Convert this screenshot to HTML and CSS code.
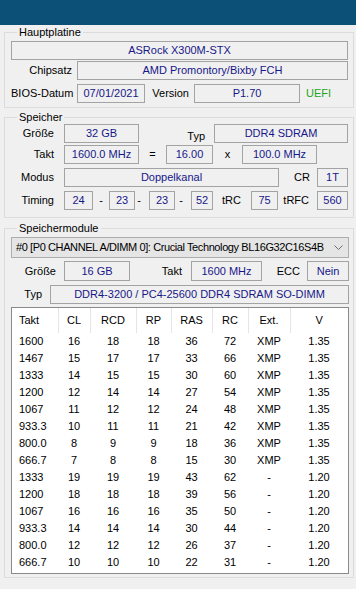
FILE: index.html
```html
<!DOCTYPE html>
<html lang="de">
<head>
<meta charset="utf-8">
<title>Hauptplatine</title>
<link rel="stylesheet" href="styles.css">
</head>
<body>
<div class="titlebar"></div>
<div class="content">
  <fieldset class="group g1">
    <legend>Hauptplatine</legend>
    <div class="row r1"><div class="field grow">ASRock X300M-STX</div></div>
    <div class="row r2"><span class="lbl w61">Chipsatz</span><div class="field grow ml5">AMD Promontory/Bixby FCH</div></div>
    <div class="row r3">
      <span class="lbl w61">BIOS-Datum</span><div class="field ml5 f-date">07/01/2021</div>
      <span class="lbl w44">Version</span><div class="field ml5 f-ver">P1.70</div>
      <span class="uefi">UEFI</span>
    </div>
  </fieldset>

  <fieldset class="group g2">
    <legend>Speicher</legend>
    <div class="row ra">
      <span class="lbl w43">Größe</span><div class="field ml10 w75">32 GB</div>
      <span class="lbl w66 low">Typ</span><div class="field ml9 grow">DDR4 SDRAM</div>
    </div>
    <div class="row rb">
      <span class="lbl w43">Takt</span><div class="field ml10 w75">1600.0 MHz</div>
      <span class="sym w27">=</span><div class="field w47">16.00</div>
      <span class="sym w29">x</span><div class="field w75">100.0 MHz</div>
    </div>
    <div class="row rc">
      <span class="lbl w43">Modus</span><div class="field ml10 w215">Doppelkanal</div>
      <span class="lbl w31">CR</span><div class="field ml7 grow">1T</div>
    </div>
    <div class="row rd">
      <span class="lbl w43">Timing</span><div class="field ml10 w29">24</div>
      <span class="sym w16">-</span><div class="field w26">23</div>
      <span class="sym w8">-</span><div class="field ml6 w26">23</div>
      <span class="sym w12">-</span><div class="field ml4 w22">52</div>
      <span class="lbl w28">tRC</span><div class="field ml10 w27">75</div>
      <span class="lbl w31">tRFC</span><div class="field ml8 grow">560</div>
    </div>
  </fieldset>

  <fieldset class="group g3">
    <legend>Speichermodule</legend>
    <div class="select">
      <span class="select-text">#0 [P0 CHANNEL A/DIMM 0]: Crucial Technology BL16G32C16S4B</span>
      <svg class="chev" width="9" height="5" viewBox="0 0 9 5"><polyline points="0.5,0.5 4.5,4.5 8.5,0.5" fill="none" stroke="#6d6d6d" stroke-width="1"/></svg>
    </div>
    <div class="row re">
      <span class="lbl w45">Größe</span><div class="field ml8 w66">16 GB</div>
      <span class="lbl w52">Takt</span><div class="field ml9 w71">1600 MHz</div>
      <span class="lbl w38">ECC</span><div class="field ml7 grow">Nein</div>
    </div>
    <div class="row rf">
      <span class="lbl w31">Typ</span><div class="field ml8 grow">DDR4-3200 / PC4-25600 DDR4 SDRAM SO-DIMM</div>
    </div>
    <div class="list">
      <table>
        <colgroup>
          <col class="c46"><col class="c32"><col class="c46"><col class="c35"><col class="c41"><col class="c36"><col class="c42"><col>
        </colgroup>
        <thead>
          <tr><th class="first">Takt</th><th>CL</th><th>RCD</th><th>RP</th><th>RAS</th><th>RC</th><th>Ext.</th><th class="last">V</th></tr>
        </thead>
        <tbody>
          <tr><td class="first">1600</td><td>16</td><td>18</td><td>18</td><td>36</td><td>72</td><td>XMP</td><td>1.35</td></tr>
          <tr><td class="first">1467</td><td>15</td><td>17</td><td>17</td><td>33</td><td>66</td><td>XMP</td><td>1.35</td></tr>
          <tr><td class="first">1333</td><td>14</td><td>15</td><td>15</td><td>30</td><td>60</td><td>XMP</td><td>1.35</td></tr>
          <tr><td class="first">1200</td><td>12</td><td>14</td><td>14</td><td>27</td><td>54</td><td>XMP</td><td>1.35</td></tr>
          <tr><td class="first">1067</td><td>11</td><td>12</td><td>12</td><td>24</td><td>48</td><td>XMP</td><td>1.35</td></tr>
          <tr><td class="first">933.3</td><td>10</td><td>11</td><td>11</td><td>21</td><td>42</td><td>XMP</td><td>1.35</td></tr>
          <tr><td class="first">800.0</td><td>8</td><td>9</td><td>9</td><td>18</td><td>36</td><td>XMP</td><td>1.35</td></tr>
          <tr><td class="first">666.7</td><td>7</td><td>8</td><td>8</td><td>15</td><td>30</td><td>XMP</td><td>1.35</td></tr>
          <tr><td class="first">1333</td><td>19</td><td>19</td><td>19</td><td>43</td><td>62</td><td>-</td><td>1.20</td></tr>
          <tr><td class="first">1200</td><td>18</td><td>18</td><td>18</td><td>39</td><td>56</td><td>-</td><td>1.20</td></tr>
          <tr><td class="first">1067</td><td>16</td><td>16</td><td>16</td><td>35</td><td>50</td><td>-</td><td>1.20</td></tr>
          <tr><td class="first">933.3</td><td>14</td><td>14</td><td>14</td><td>30</td><td>44</td><td>-</td><td>1.20</td></tr>
          <tr><td class="first">800.0</td><td>12</td><td>12</td><td>12</td><td>26</td><td>37</td><td>-</td><td>1.20</td></tr>
          <tr><td class="first">666.7</td><td>10</td><td>10</td><td>10</td><td>22</td><td>31</td><td>-</td><td>1.20</td></tr>
        </tbody>
      </table>
    </div>
  </fieldset>
</div>
</body>
</html>
```
FILE: styles.css
```css
* { box-sizing: border-box; }
html, body {
  margin: 0;
  padding: 0;
  background: #f0f0f0;
}
body {
  width: 356px;
  height: 589px;
  overflow: hidden;
  font-family: "Liberation Sans", Arial, sans-serif;
  font-size: 11px;
  line-height: 13px;
  color: #000;
}
.titlebar {
  height: 25px;
  background: #0c5077;
}
.content {
  padding: 0 2px 0 4px;
}
.group {
  margin: 0;
  padding: 0 5px 0 6px;
  border: 1px solid #dcdcdc;
  min-width: 0;
}
.group legend {
  padding: 0 2px;
  margin-left: 6px;
  line-height: 14px;
  height: 14px;
}
.g1 { padding-top: 2px; padding-bottom: 4px; }
.g2 { margin-top: 2px; padding-bottom: 7px; }
.g3 { margin-top: 3px; padding-top: 2px; padding-bottom: 3px; padding-right: 4px; }

.row {
  display: flex;
  align-items: center;
  height: 19px;
}
.r1 { margin-bottom: 1px; }
.r2 { margin-bottom: 4px; }
.ra { margin-bottom: 2px; }
.rb { margin-bottom: 4px; }
.rc { margin-bottom: 4px; }
.re { height: 20px; margin-top: 3px; margin-bottom: 4px; }
.rf { margin-bottom: 3px; }

.lbl {
  flex: none;
  text-align: right;
  white-space: nowrap;
}
.lbl.low { align-self: flex-start; padding-top: 6px; }
.sym {
  flex: none;
  text-align: center;
}
.field {
  flex: none;
  height: 100%;
  border: 1px solid #a3a3a3;
  background: #f0f0f0;
  color: #17178a;
  display: flex;
  align-items: center;
  justify-content: center;
  white-space: nowrap;
  overflow: hidden;
}
.field.grow { flex: 1 1 auto; }
.uefi {
  margin-left: 6px;
  color: #1ea51e;
}

.w8 { width: 8px; }
.w12 { width: 12px; }
.w16 { width: 16px; }
.w22 { width: 22px; }
.w26 { width: 26px; }
.w27 { width: 27px; }
.w28 { width: 28px; }
.w29 { width: 29px; }
.w31 { width: 31px; }
.w38 { width: 38px; }
.w43 { width: 43px; }
.w44 { width: 44px; }
.w45 { width: 45px; }
.w47 { width: 47px; }
.w52 { width: 52px; }
.w61 { width: 61px; }
.w66 { width: 66px; }
.w71 { width: 71px; }
.w75 { width: 75px; }
.w215 { width: 215px; }
.f-date { width: 68px; }
.f-ver { width: 106px; }
.ml4 { margin-left: 4px; }
.ml5 { margin-left: 5px; }
.ml6 { margin-left: 6px; }
.ml7 { margin-left: 7px; }
.ml8 { margin-left: 8px; }
.ml9 { margin-left: 9px; }
.ml10 { margin-left: 10px; }

.select {
  height: 21px;
  border: 1px solid #adadad;
  background: #e5e5e5;
  display: flex;
  align-items: center;
  padding: 0 5px 0 4px;
  white-space: nowrap;
}
.select-text {
  flex: 1 1 auto;
  min-width: 0;
  overflow: hidden;
  letter-spacing: -0.4px;
}
.select .chev { flex: none; margin-left: 4px; }

.list {
  height: 267px;
  border: 1px solid #8a8a8a;
  background: #fff;
  overflow: hidden;
}
.list table {
  width: 100%;
  border-collapse: collapse;
  table-layout: fixed;
}
.c46 { width: 46px; }
.c32 { width: 32px; }
.c35 { width: 35px; }
.c41 { width: 41px; }
.c36 { width: 36px; }
.c42 { width: 42px; }
.list th {
  height: 25px;
  padding: 0;
  font-weight: normal;
  text-align: center;
  border-right: 1px solid #e5e5e5;
}
.list th.last { border-right: none; }
.list td {
  height: 17px;
  padding: 0;
  text-align: center;
  white-space: nowrap;
}
.list .first {
  text-align: left;
  padding-left: 7px;
}
```
